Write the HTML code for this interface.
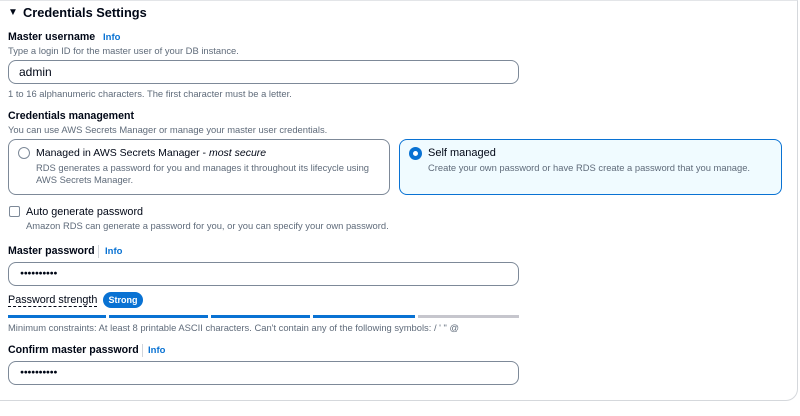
<!DOCTYPE html>
<html><head><meta charset="utf-8"><style>
*{box-sizing:border-box;margin:0;padding:0}
body{width:800px;height:416px;background:#fff;font-family:"Liberation Sans",sans-serif;position:relative;overflow:hidden;color:#000716}
.a{position:absolute;white-space:nowrap}
.card{position:absolute;left:-20px;top:0;width:818px;height:401px;border:1px solid #d5d8dc;border-radius:0 0 12px 12px;border-top-color:#e3e5e8}
.t{font-size:12.8px;font-weight:bold}
.l{font-size:10.6px;font-weight:bold}
.d{font-size:9.4px;color:#5f6b7a}
.info{font-size:9.5px;font-weight:bold;color:#0972d3}
.in{position:absolute;left:8px;width:511px;height:24px;border:1px solid #7d8998;border-radius:8px;font-size:12px;padding-left:10px;line-height:22px}
.dots{font-size:6.8px;letter-spacing:-0.4px;font-weight:bold;padding-left:11px}
.sep{position:absolute;width:1px;height:13px;background:#d1d5db}
.bar{position:absolute;top:315px;height:3px;background:#0972d3}
</style></head><body>
<div class="card"></div>
<div class="a" style="left:8px;top:7px;font-size:10px">▼</div>
<div class="a t" style="left:23px;top:5px">Credentials Settings</div>
<div class="a l" style="left:8px;top:31px">Master username</div>
<div class="a info" style="left:103px;top:32px">Info</div>
<div class="a d" style="left:8px;top:45px">Type a login ID for the master user of your DB instance.</div>
<div class="in" style="top:60px">admin</div>
<div class="a d" style="left:8px;top:88px">1 to 16 alphanumeric characters. The first character must be a letter.</div>
<div class="a l" style="left:8px;top:110px">Credentials management</div>
<div class="a d" style="left:8px;top:124px">You can use AWS Secrets Manager or manage your master user credentials.</div>
<div class="a" style="left:8px;top:139px;width:382px;height:56px;border:1px solid #7d8998;border-radius:8px"></div>
<div class="a" style="left:18px;top:147px;width:12px;height:12px;border:1.5px solid #7d8998;border-radius:50%"></div>
<div class="a" style="left:36px;top:147px;font-size:10.5px">Managed in AWS Secrets Manager - <i>most secure</i></div>
<div class="a d" style="left:36px;top:162px;line-height:12px;white-space:normal;width:340px">RDS generates a password for you and manages it throughout its lifecycle using AWS Secrets Manager.</div>
<div class="a" style="left:399px;top:139px;width:383px;height:56px;border:1.5px solid #0972d3;border-radius:8px;background:#f0fbff"></div>
<div class="a" style="left:409px;top:147px;width:13px;height:13px;border:4px solid #0972d3;border-radius:50%;background:#fff"></div>
<div class="a" style="left:428px;top:147px;font-size:11px">Self managed</div>
<div class="a d" style="left:428px;top:162px">Create your own password or have RDS create a password that you manage.</div>
<div class="a" style="left:9px;top:206px;width:11px;height:11px;border:1.5px solid #7d8998;border-radius:2px"></div>
<div class="a" style="left:26px;top:206px;font-size:10.8px">Auto generate password</div>
<div class="a d" style="left:26px;top:220px">Amazon RDS can generate a password for you, or you can specify your own password.</div>
<div class="a l" style="left:8px;top:245px">Master password</div>
<div class="sep" style="left:98px;top:245px"></div>
<div class="a info" style="left:105px;top:246px">Info</div>
<div class="in dots" style="top:262px">●●●●●●●●●●</div>
<div class="a" style="left:8px;top:294px;font-size:10.8px;border-bottom:1px dashed #000716;line-height:12px">Password strength</div>
<div class="a" style="left:103px;top:292px;width:40px;height:16px;background:#0972d3;border-radius:8px;color:#fff;font-size:9px;font-weight:bold;text-align:center;line-height:16px">Strong</div>
<div class="bar" style="left:8px;width:98px"></div>
<div class="bar" style="left:109px;width:99px"></div>
<div class="bar" style="left:211px;width:99px"></div>
<div class="bar" style="left:313px;width:102px"></div>
<div class="bar" style="left:418px;width:101px;background:#c6c6cd"></div>
<div class="a d" style="left:8px;top:322px">Minimum constraints: At least 8 printable ASCII characters. Can't contain any of the following symbols: / ' " @</div>
<div class="a l" style="left:8px;top:344px">Confirm master password</div>
<div class="sep" style="left:142px;top:344px"></div>
<div class="a info" style="left:148px;top:345px">Info</div>
<div class="in dots" style="top:361px">●●●●●●●●●●</div>
</body></html>
